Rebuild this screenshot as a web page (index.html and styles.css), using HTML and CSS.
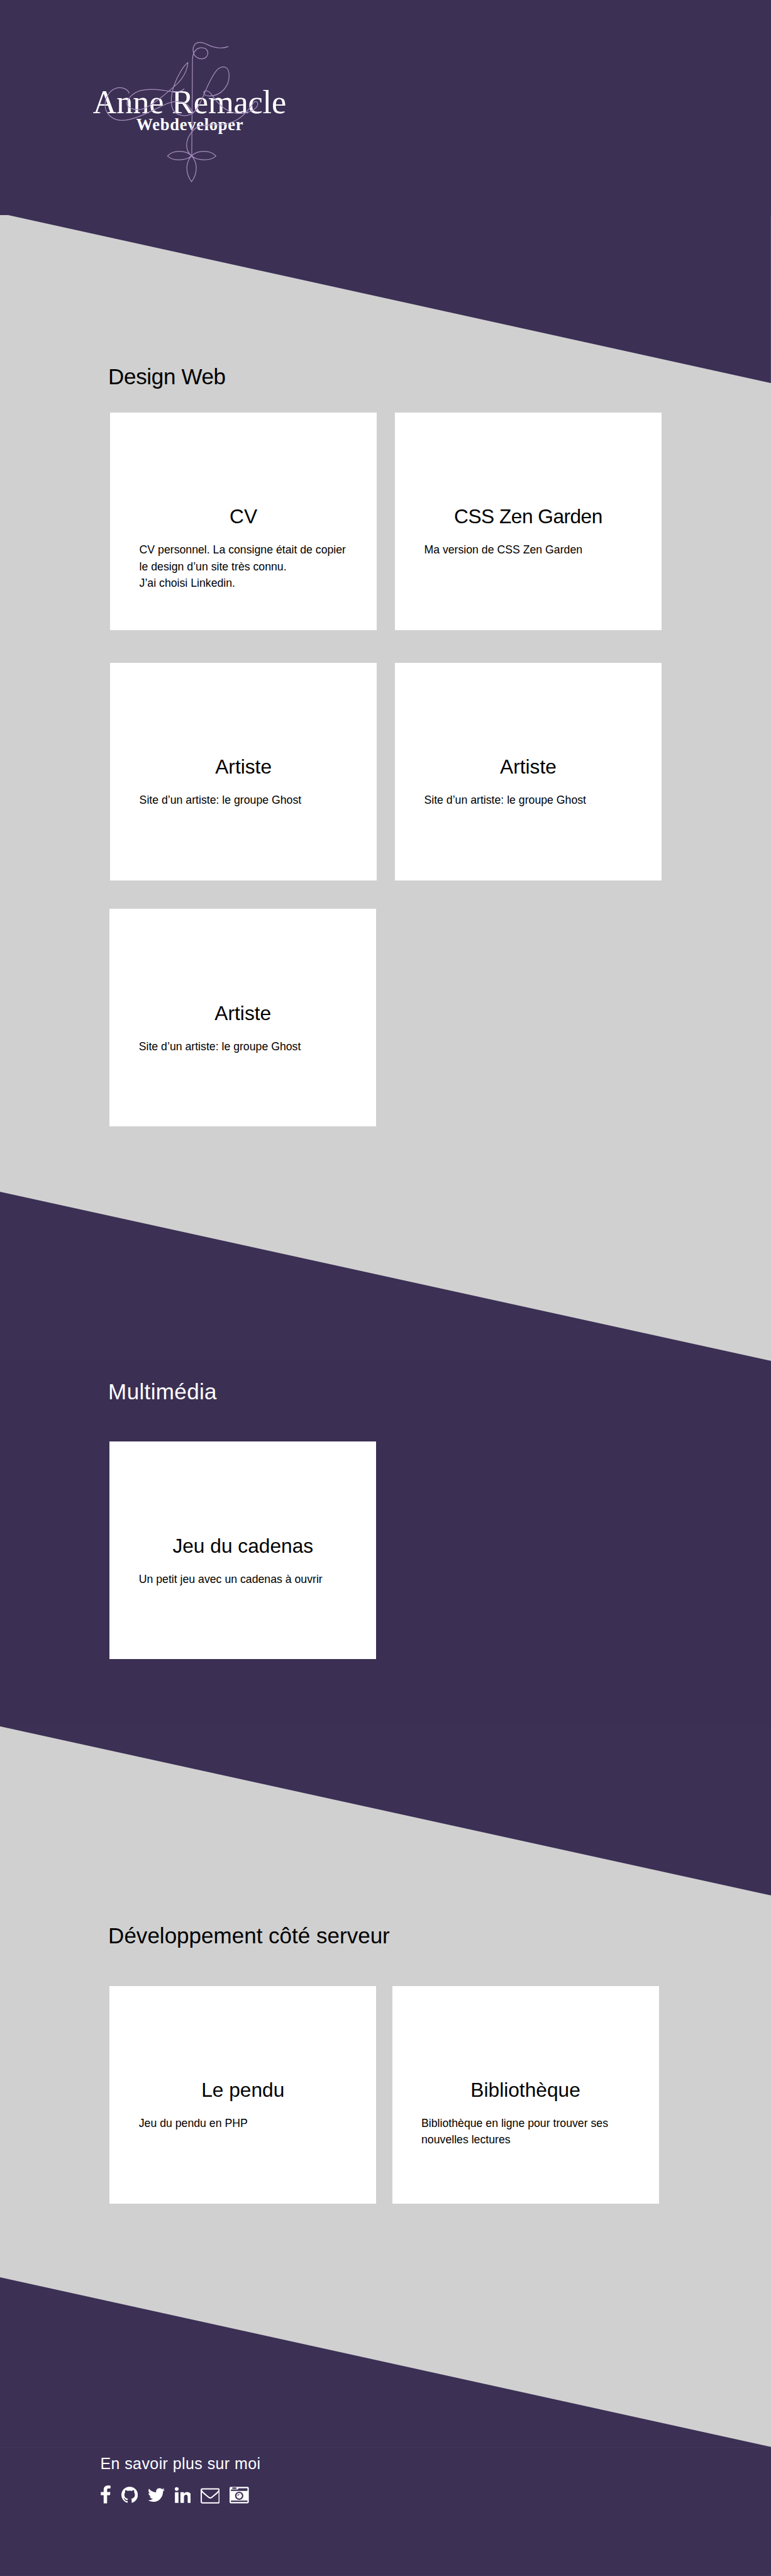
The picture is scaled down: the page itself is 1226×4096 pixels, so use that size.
FILE: index.html
```html
<!DOCTYPE html>
<html lang="fr">
<head>
<meta charset="utf-8">
<title>Anne Remacle - Webdeveloper</title>
<link rel="stylesheet" href="styles.css">
</head>
<body>
<header class="header">
  <svg class="logo" viewBox="0 0 1260 900" role="img" aria-label="Anne Remacle, Webdeveloper">
    <text class="logo-name" x="84" y="465" textLength="1054">Anne Remacle</text>
    <text class="logo-job" x="320" y="558" textLength="583">Webdeveloper</text>
    <g class="logo-lines">
      <path d="M821 103C780 118 745 110 710 93C685 80 660 74 643 88C630 100 628 120 633 140C640 160 660 171 680 170C702 168 712 150 711 135C708 115 690 108 672 109C650 111 628 130 627 175L623 700"/>
      <path d="M282 357C275 335 250 326 228 327C185 330 152 370 151 420C151 470 190 502 240 505C310 505 400 455 470 422C510 402 540 398 575 405C600 412 615 440 628 458"/>
      <path d="M581 334C565 350 530 352 490 345C440 335 390 332 345 342C300 355 270 390 270 415C275 440 310 450 350 445C400 430 470 370 530 318C570 285 600 235 602 190C580 205 545 260 525 320C510 370 505 410 520 445C540 480 590 490 628 466C655 445 670 410 690 362C710 315 745 240 770 222C800 205 822 215 826 250C832 320 780 372 720 372C695 372 685 362 690 348C700 338 720 345 735 370C770 420 820 465 880 467C930 470 975 445 982 420C985 400 970 398 960 408C945 430 935 445 920 458C890 500 830 525 780 530C740 528 700 528 660 538C625 555 595 600 595 640C596 665 605 685 622 698"/>
      <path d="M622 698C590 665 520 665 491 699C520 727 590 727 622 698C655 665 725 665 755 699C725 727 655 727 622 698C588 735 588 795 622 839C656 795 656 735 622 698Z"/>
    </g>
  </svg>
</header>

<main>
  <section class="section section-web">
    <h2 class="section-title">Design Web</h2>
    <div class="rows">
      <div class="row">
        <article class="card">
          <h3 class="card-title">CV</h3>
          <p class="card-text">CV personnel. La consigne était de copier<br>le design d’un site très connu.<br>J’ai choisi Linkedin.</p>
        </article>
        <article class="card">
          <h3 class="card-title card-title-tight">CSS Zen Garden</h3>
          <p class="card-text">Ma version de CSS Zen Garden</p>
        </article>
      </div>
      <div class="row">
        <article class="card">
          <h3 class="card-title">Artiste</h3>
          <p class="card-text">Site d’un artiste: le groupe Ghost</p>
        </article>
        <article class="card">
          <h3 class="card-title">Artiste</h3>
          <p class="card-text">Site d’un artiste: le groupe Ghost</p>
        </article>
      </div>
      <div class="row row-last">
        <article class="card">
          <h3 class="card-title">Artiste</h3>
          <p class="card-text">Site d’un artiste: le groupe Ghost</p>
        </article>
      </div>
    </div>
  </section>

  <section class="section section-multimedia">
    <h2 class="section-title">Multimédia</h2>
    <div class="row">
      <article class="card">
        <h3 class="card-title">Jeu du cadenas</h3>
        <p class="card-text">Un petit jeu avec un cadenas à ouvrir</p>
      </article>
    </div>
  </section>

  <section class="section section-server">
    <h2 class="section-title">Développement côté serveur</h2>
    <div class="row">
      <article class="card">
        <h3 class="card-title">Le pendu</h3>
        <p class="card-text">Jeu du pendu en PHP</p>
      </article>
      <article class="card">
        <h3 class="card-title">Bibliothèque</h3>
        <p class="card-text">Bibliothèque en ligne pour trouver ses<br>nouvelles lectures</p>
      </article>
    </div>
  </section>
</main>

<footer class="footer">
  <div class="contact">
    <h2 class="contact-title">En savoir plus sur moi</h2>
    <div class="icons">
      <svg class="icon icon-facebook" viewBox="0 0 19 34"><path transform="translate(.3 0) scale(.0204 .0195) translate(-479 0)" d="M1343 12v264h-157q-86 0-116 36t-30 108v189h293l-39 296h-254v759h-306v-759h-255v-296h255v-218q0-186 104-288.500t277-102.500q147 0 228 12z"/></svg>
      <svg class="icon icon-github" viewBox="0 0 30 34"><path transform="translate(0 2.3) scale(.01953) translate(-128 -128)" d="M896 128q209 0 385.500 103t279.500 279.500 103 385.500q0 251-146.500 451.500t-378.500 277.500q-27 5-40-7t-13-30q0-3 .5-76.500t.5-134.500q0-97-52-142 57-6 102.500-18t94-39 81-66.500 53-105 20.500-150.500q0-119-79-206 37-91-8-204-28-9-81 11t-92 44l-38 24q-93-26-192-26t-192 26q-16-11-42.500-27t-83.500-38.500-85-13.500q-45 113-8 204-79 87-79 206 0 85 20.500 150t52.500 105 80.500 67 94 39 102.500 18q-39 36-49 103-21 10-45 15t-57 5-65.500-21.500-55.500-62.500q-19-32-48.500-52t-49.500-24l-20-3q-21 0-29 4.500t-5 11.500 9 14 13 12l7 5q22 10 43.500 38t31.500 51l10 23q13 38 44 61.500t67 30 69.500 7 55.500-3.500l23-4q0 38 .5 88.500t.5 54.500q0 18-13 30t-40 7q-232-77-378.500-277.500t-146.500-451.500q0-209 103-385.500t279.500-279.500 385.500-103z"/></svg>
      <svg class="icon icon-twitter" viewBox="0 0 31 34"><path transform="translate(0 4.8) scale(.01953) translate(-108 -256)" d="M1684 408q-67 98-162 167 1 14 1 42 0 130-38 259.500t-115.500 248.500-184.500 210.500-258 146-323 54.500q-271 0-496-145 35 4 78 4 225 0 401-138-105-2-188-64.500t-114-159.500q33 5 61 5 43 0 85-11-112-23-185.500-111.500t-73.500-205.500v-4q68 38 146 41-66-44-105-115t-39-154q0-88 44-163 121 149 294.500 238.500t371.500 99.500q-8-38-8-74 0-134 94.500-228.500t228.500-94.500q140 0 236 102 109-21 205-78-37 115-142 178 93-10 186-50z"/></svg>
      <svg class="icon icon-linkedin" viewBox="0 0 29 34"><path transform="translate(-.2 3) scale(.01953) translate(-128 -148)" d="M477 625v991h-330v-991h330zm21-306q1 73-50.500 122t-135.500 49h-2q-82 0-132-49t-50-122q0-74 51.500-122.500t134.500-48.500 133 48.500 51 122.500zm1166 729v568h-329v-530q0-105-40.500-164.500t-126.500-59.500q-63 0-105.500 34.500t-63.500 85.500q-11 30-11 81v553h-329q2-399 2-647t-1-296l-1-48h329v144h-2q20-32 41-56t56.500-52 87-43.500 114.500-15.500q171 0 275 113.500t104 332.500z"/></svg>
      <svg class="icon icon-mail" viewBox="0 0 35 34"><g fill="none" stroke="#fff" stroke-width="2.300"><rect x="1.200" y="6.200" width="32.600" height="25.600" rx="2"/><path d="M1.500 9C3 12.500 6 14.500 9 16.800L14.500 21.500Q17.500 24 20.500 21.500L26 16.800C29 14.500 32 12.500 33.500 9"/></g></svg>
      <svg class="icon icon-camera" viewBox="0 0 35 34"><path fill-rule="evenodd" transform="translate(0 2.500) scale(.01953) translate(0 -128)" d="M928 832q0-14-9-23t-23-9q-66 0-113 47t-47 113q0 14 9 23t23 9 23-9 9-23q0-40 28-68t68-28q14 0 23-9t9-23zm224 130q0 106-75 181t-181 75-181-75-75-181 75-181 181-75 181 75 75 181zm-1024 574h1536v-128h-1536v128zm1152-574q0-159-112.500-271.500t-271.500-112.500-271.500 112.500-112.500 271.500 112.500 271.500 271.500 112.500 271.500-112.500 112.500-271.500zm-1024-642h384v-128h-384v128zm-128 192h1536v-256h-828l-64 128h-644v128zm1664-256v1280q0 53-37.500 90.500t-90.500 37.500h-1536q-53 0-90.500-37.500t-37.500-90.500v-1280q0-53 37.500-90.500t90.500-37.500h1536q53 0 90.500 37.500t37.500 90.500z"/></svg>
    </div>
  </div>
</footer>
</body>
</html>
```
FILE: styles.css
```css
* {
  box-sizing: border-box;
  margin: 0;
  padding: 0;
}

/* 1rem is ten layout units; the page is 140rem wide */
html {
  font-size: 8.759px;
  background: #3c3055;
}

body {
  font-family: "Liberation Sans", Arial, sans-serif;
  color: #000;
  overflow-x: hidden;
}

.header {
  height: 39rem;
  padding: 5rem 0 0 14rem;
  background: #3c3055;
}

.logo {
  display: block;
  width: 42rem;
  height: 30rem;
}

.logo-name,
.logo-job {
  font-family: "Liberation Serif", serif;
  fill: #fff;
}

.logo-name {
  font-size: 180px;
}

.logo-job {
  font-size: 91px;
  font-weight: bold;
}

.logo-lines {
  fill: none;
  stroke: #a68fbd;
  stroke-width: 4.2;
  stroke-linecap: round;
}

.section {
  padding-left: 19.9rem;
  background-repeat: no-repeat;
}

.section-web {
  height: 177.4rem;
  padding-top: 27rem;
  background-color: #d0d0d0;
  background-image: linear-gradient(to top right, #d0d0d0 calc(50% - .5px), #3c3055 calc(50% + .5px));
  background-size: calc(100% - 1.5rem) 30.5rem;
  background-position: right top;
}

.section-multimedia {
  height: 97rem;
  padding-top: 33.9rem;
  background-color: #3b2f53;
  background-image: linear-gradient(to top right, #3c3055 calc(50% - .5px), #d0d0d0 calc(50% + .5px));
  background-size: 100% 30.7rem;
}

.section-server {
  height: 100rem;
  padding-top: 35.6rem;
  background-color: #d0d0d0;
  background-image: linear-gradient(to top right, #d0d0d0 calc(50% - .5px), #3c3055 calc(50% + .5px));
  background-size: 100% 30.7rem;
}

.section-title {
  margin: 0 0 6.7rem -.25rem;
  font-size: 4rem;
  font-weight: normal;
  line-height: 4.8rem;
}

.section-web .section-title {
  margin-bottom: 4.1rem;
  letter-spacing: -.04rem;
}

.section-multimedia .section-title {
  margin-bottom: 6.6rem;
  color: #fff;
  letter-spacing: .04rem;
}

.rows {
  display: flex;
  flex-direction: column;
  gap: 5.9rem;
  padding-left: .1rem;
}

.row {
  display: flex;
  gap: 3.3rem;
}

.row-last {
  margin: -.7rem 0 0 -.1rem;
}

.section-server .row {
  gap: 2.9rem;
}

.card {
  width: 48.4rem;
  height: 39.5rem;
  padding-top: 16.95rem;
  background: #fff;
}

.card-title {
  margin-bottom: 2.5rem;
  font-size: 3.62rem;
  font-weight: normal;
  line-height: 4rem;
  text-align: center;
}

.card-title-tight {
  letter-spacing: -.06rem;
}

.card-text {
  padding-left: 5.3rem;
  font-size: 2.02rem;
  line-height: 3rem;
  white-space: nowrap;
}

.footer {
  height: 54.2rem;
  padding-top: 30.8rem;
  color: #fff;
  background: linear-gradient(to top right, #3c3055 calc(50% - .5px), #d0d0d0 calc(50% + .5px)) 0 0 / 100% 30.8rem no-repeat #3c3055;
}

.contact {
  height: 100%;
  padding: 1.25rem 0 0 18.2rem;
  border-top: 1px solid #43365d;
  border-bottom: 1px solid #43365d;
}

.contact-title {
  margin-bottom: 2.2rem;
  font-size: 2.85rem;
  font-weight: normal;
  line-height: 3.4rem;
  letter-spacing: .05rem;
}

.icons {
  display: flex;
  gap: 1.8rem;
  padding-left: .1rem;
}

.icon {
  height: 3.4rem;
  fill: #fff;
}

.icon-facebook { width: 1.9rem; }
.icon-github { width: 3rem; }
.icon-twitter { width: 3.1rem; }
.icon-linkedin { width: 2.9rem; }
.icon-mail,
.icon-camera { width: 3.5rem; }
```
